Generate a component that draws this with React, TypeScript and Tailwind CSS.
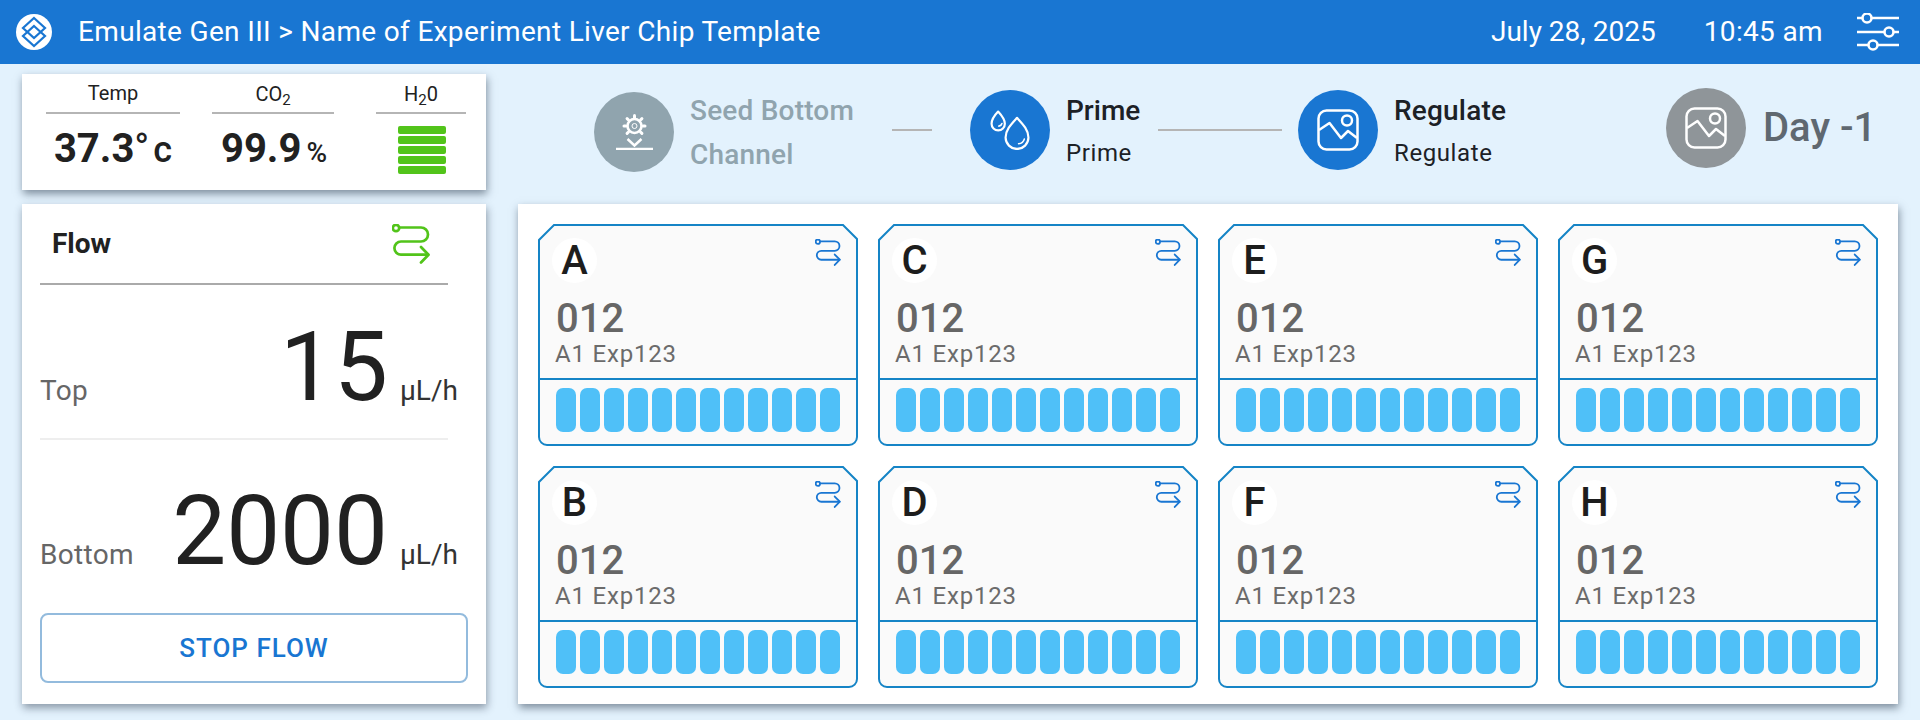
const LETTERS = ['A', 'C', 'E', 'G', 'B', 'D', 'F', 'H'];
const PILLS = Array.from({ length: 12 }, (_, i) => i);
const GEAR_TEETH = [0, 45, 90, 135, 225, 270, 315];

function RouteIcon({ className }: { className: string }) {
  return (
    <svg viewBox="0 0 38 40" fill="none" stroke="currentColor" strokeWidth="2.7" strokeLinecap="round" strokeLinejoin="round" className={className}>
      <circle cx="4" cy="4" r="3.2" />
      <path d="M7.5 3.5H29a7 7 0 0 1 0 14H9a6.6 6.6 0 0 0 0 13.2H36" />
      <path d="M29 23l7.5 7.7L29 38.5" />
    </svg>
  );
}

function ImageIcon() {
  return (
    <svg viewBox="0 0 42 42" fill="none" stroke="white" strokeWidth="2.5" strokeLinejoin="round" className="h-[42px] w-[42px]">
      <rect x="1.5" y="1.5" width="39" height="39" rx="8" />
      <circle cx="30" cy="11.5" r="5" />
      <path d="M2 21L12.5 14L24 29L31 22L40 29" />
    </svg>
  );
}

function SeedIcon() {
  return (
    <svg viewBox="0 0 37 37" fill="none" stroke="white" className="h-[37px] w-[37px]">
      <circle cx="18.5" cy="13" r="7" strokeWidth="2.6" />
      <circle cx="18.5" cy="13" r="2.5" strokeWidth="1" />
      {GEAR_TEETH.map((a) => (
        <path key={a} d="M18.5 4.5V2.5" strokeWidth="3" strokeLinecap="round" transform={`rotate(${a} 18.5 13)`} />
      ))}
      <path d="M11.5 26l7 6.5 7-6.5" strokeWidth="2.4" />
      <path d="M0 36H37" strokeWidth="2.4" />
    </svg>
  );
}

function DropsIcon() {
  return (
    <svg viewBox="0 0 38.5 38.5" fill="none" stroke="white" strokeWidth="2.1" strokeLinejoin="round" strokeLinecap="round" className="h-10 w-10">
      <path d="M7.8 1.5C4 5.5 1.5 9 1.5 13.2a6.4 6.4 0 0 0 12.8 0C14.3 9 11.5 5.5 7.8 1.5z" />
      <path d="M8.5 15.5q2.5-.3 3-2.5" strokeWidth="1.5" />
      <path d="M26 7.5C20.5 13.5 15 19 15 26.5a11 11 0 0 0 22 0C37 19 31.5 13.5 26 7.5z" />
      <path d="M27.5 32.5q4.5-.5 5.5-4.5" strokeWidth="1.5" />
    </svg>
  );
}

function ChipCard({ letter }: { letter: string }) {
  return (
    <div className="relative h-[222px] w-[320px]">
      <svg viewBox="0 0 320 222" className="absolute inset-0 h-full w-full">
        <path d="M16 1H305L319 15V213a8 8 0 0 1-8 8H9a8 8 0 0 1-8-8V16z" fill="#fafafa" stroke="#1584c6" strokeWidth="2" />
      </svg>
      <div className="relative flex h-[156px] flex-col border-b-2 border-[#1584c6] pt-[14px]">
        <div className="ml-[14px] flex h-[45px] w-[45px] items-center justify-center rounded-full bg-white text-[40px] leading-none font-medium text-[#1d1d1d]">
          {letter}
        </div>
        <div className="mt-[16px] ml-[18px] text-[40px] leading-[40px] font-medium text-[#666666]">012</div>
        <div className="mt-[3px] ml-[17px] text-[24px] leading-[24px] tracking-[0.8px] text-[#6b6b6b]">A1 Exp123</div>
      </div>
      <div className="relative flex gap-1 pt-2 pl-[18px]">
        {PILLS.map((p) => (
          <div key={p} className="h-[44px] w-5 rounded-[7px] bg-[#4fc0f8]" />
        ))}
      </div>
      <RouteIcon className="absolute top-[15px] right-[17px] h-[27px] w-[26px] text-[#1976d2]" />
    </div>
  );
}

function FlowRow({ label, value, className }: { label: string; value: string; className: string }) {
  return (
    <div className={`flex w-[418px] items-baseline ${className}`}>
      <span className="text-[28px] tracking-[0.3px] text-[#666666]">{label}</span>
      <span className="ml-auto text-[96px] leading-[96px] text-[#212121]">{value}</span>
      <span className="ml-[12px] w-[58px] text-[28px] whitespace-nowrap text-[#333333]">µL/h</span>
    </div>
  );
}

export default function App() {
  return (
    <div className="flex h-[720px] w-[1920px] flex-col overflow-hidden bg-[#e3f2fd] [font-family:Roboto,sans-serif]">
      {/* top bar */}
      <div className="flex h-16 shrink-0 items-center bg-[#1976d2] pr-[21px] pl-4 text-[28px] text-white">
        <div className="flex h-9 w-9 items-center justify-center rounded-full bg-white">
          <svg viewBox="0 0 36 36" fill="none" stroke="#1976d2" strokeWidth="2.2" className="h-9 w-9">
            <path d="M18 4L29 14L18 24L7 14z" />
            <path d="M18 12L29 22L18 32L7 22z" />
          </svg>
        </div>
        <span className="ml-[26px] tracking-[0.33px]">Emulate Gen III &gt; Name of Experiment Liver Chip Template</span>
        <span className="ml-auto">July 28, 2025</span>
        <span className="ml-12 tracking-[0.35px]">10:45 am</span>
        <svg viewBox="0 0 42 38" fill="none" stroke="white" strokeWidth="2.6" className="ml-[34px] h-[38px] w-[42px]">
          <path d="M0 5H42M0 19H42M0 32H42" />
          <circle cx="10" cy="5" r="4.5" fill="#1976d2" />
          <circle cx="32" cy="19" r="4.5" fill="#1976d2" />
          <circle cx="16" cy="32" r="4.5" fill="#1976d2" />
        </svg>
      </div>

      <div className="flex flex-1 pl-[22px]">
        {/* left column */}
        <div className="flex w-[464px] shrink-0 flex-col gap-[14px] pt-[10px]">
          <div className="flex h-[116px] gap-0 bg-white pl-6 text-[#212121] shadow-[1px_4px_8px_rgba(30,45,65,0.5)]">
            <div className="w-[134px]">
              <div className="h-[40px] border-b-2 border-[#b5b5b5] pt-[4px] text-center text-[20px] leading-[30px]">Temp</div>
              <div className="mt-[15px] flex items-baseline justify-center text-[40px] leading-[40px] font-bold">
                37.3<span className="font-normal">°</span>
                <span className="ml-[4px] text-[36px] font-medium">c</span>
              </div>
            </div>
            <div className="ml-8 w-[122px]">
              <div className="h-[40px] border-b-2 border-[#b5b5b5] pt-[5px] text-center text-[20px] leading-[30px]">
                CO<sub>2</sub>
              </div>
              <div className="mt-[15px] flex items-baseline justify-center pl-[2px] text-[40px] leading-[40px] font-bold">
                99.9<span className="ml-[5px] text-[28px] font-medium">%</span>
              </div>
            </div>
            <div className="ml-[42px] w-[90px]">
              <div className="h-[40px] border-b-2 border-[#b5b5b5] pt-[5px] text-center text-[20px] leading-[30px]">
                H<sub>2</sub>0
              </div>
              <div className="mt-[12px] ml-[22px] flex w-12 flex-col gap-0.5">
                {[0, 1, 2, 3, 4].map((b) => (
                  <div key={b} className="h-2 rounded-[2px] bg-[#52c41a]" />
                ))}
              </div>
            </div>
          </div>

          <div className="flex h-[500px] flex-col bg-white pl-[18px] shadow-[1px_4px_8px_rgba(30,45,65,0.45)]">
            <div className="flex h-[81px] w-[408px] items-center justify-between border-b-2 border-[#aaaaaa] pr-[18px] pl-3">
              <span className="text-[28px] font-bold text-[#212121]">Flow</span>
              <RouteIcon className="h-10 w-[38px] text-[#52c41a]" />
            </div>
            <FlowRow label="Top" value="15" className="pt-[34px]" />
            <div className="mt-[23px] h-0.5 w-[408px] bg-[#eeeeee]" />
            <FlowRow label="Bottom" value="2000" className="pt-[43px]" />
            <button className="mt-[34px] h-[70px] w-[428px] rounded-lg border-2 border-[#93bbdd] text-[26px] font-medium tracking-[1px] text-[#1976d2]">
              STOP FLOW
            </button>
          </div>
        </div>

        {/* right column */}
        <div className="ml-8 flex w-[1380px] shrink-0 flex-col">
          <div className="flex h-[132px] items-center pl-[76px]">
            <div className="mt-[3px] flex h-20 w-20 items-center justify-center rounded-full bg-[#90a4ae]">
              <SeedIcon />
            </div>
            <div className="mt-[5px] ml-4 w-[202px] text-[28px] leading-[44px] font-medium tracking-[0.2px] text-[#90a4ae]">
              Seed Bottom
              <br />
              Channel
            </div>
            <div className="h-0.5 w-10 bg-[#b5b5b5]" />
            <div className="ml-[38px] flex h-20 w-20 items-center justify-center rounded-full bg-[#1976d2]">
              <DropsIcon />
            </div>
            <div className="mt-[2px] ml-4 w-[92px] text-[#1c2126]">
              <div className="text-[28px] leading-[44px] font-medium">Prime</div>
              <div className="text-[24px] leading-[40px] tracking-[0.6px]">Prime</div>
            </div>
            <div className="h-0.5 w-[124px] bg-[#b5b5b5]" />
            <div className="ml-4 flex h-20 w-20 items-center justify-center rounded-full bg-[#1976d2]">
              <ImageIcon />
            </div>
            <div className="mt-[2px] ml-4 w-[272px] text-[#1c2126]">
              <div className="text-[28px] leading-[44px] font-medium tracking-[0.2px]">Regulate</div>
              <div className="text-[24px] leading-[40px] tracking-[0.6px]">Regulate</div>
            </div>
            <div className="mb-1 flex h-20 w-20 items-center justify-center rounded-full bg-[#8f9599]">
              <ImageIcon />
            </div>
            <span className="mb-1 ml-[17px] text-[40px] font-medium text-[#5f6870]">Day -1</span>
          </div>

          <div className="mt-2 grid h-[500px] grid-cols-[repeat(4,320px)] grid-rows-[repeat(2,222px)] gap-5 bg-white pt-5 pl-5 shadow-[1px_4px_8px_rgba(30,45,65,0.5)]">
            {LETTERS.map((l) => (
              <ChipCard key={l} letter={l} />
            ))}
          </div>
        </div>
      </div>
    </div>
  );
}
